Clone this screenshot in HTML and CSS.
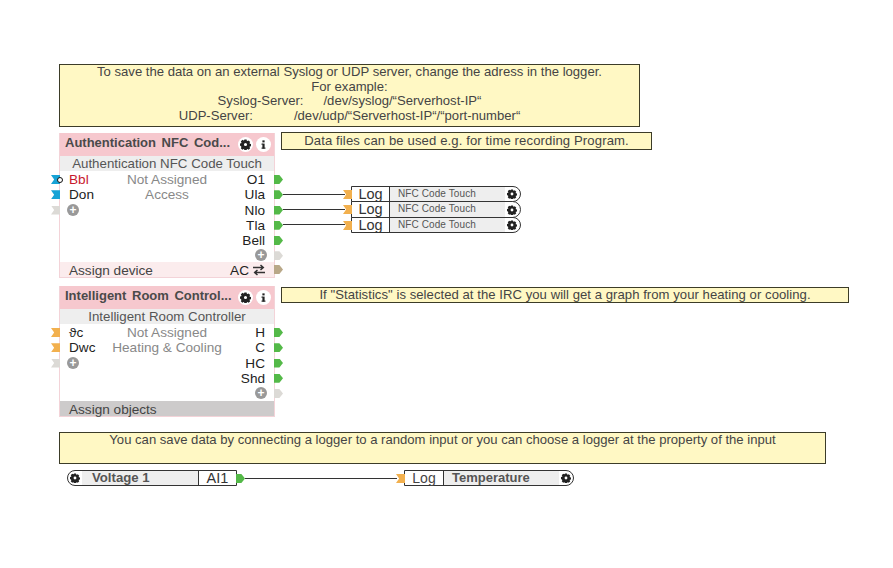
FILE: index.html
```html
<!DOCTYPE html>
<html lang="en">
<head>
<meta charset="utf-8">
<title>Logger</title>
<link rel="stylesheet" href="styles.css">
</head>
<body>
<svg class="defs" width="0" height="0" aria-hidden="true">
  <symbol id="cog" viewBox="0 0 12 12">
    <path fill="#222" fill-rule="evenodd" d="M4.800.6h2.400l.3 1.300.7.300 1.200-.7 1.700 1.700-.7 1.200.3.700 1.300.3v2.400l-1.300.3-.3.7.7 1.200-1.700 1.700-1.200-.7-.7.3-.3 1.300H4.800l-.3-1.300-.7-.3-1.200.7-1.700-1.700.7-1.200-.3-.7L0 7.200V4.800l1.300-.3.3-.7-.7-1.200 1.700-1.700 1.200.7.700-.3zM6 4.300a1.700 1.700 0 1 0 0 3.400 1.700 1.700 0 0 0 0-3.400z"/>
  </symbol>
  <symbol id="info" viewBox="0 0 12 12">
    <rect x="4.800" y="1.500" width="2.400" height="2.200" fill="#222"/>
    <rect x="4.800" y="5" width="2.400" height="5.500" fill="#222"/>
    <rect x="3.800" y="5" width="1.500" height="1.200" fill="#222"/>
    <rect x="3.800" y="9.400" width="4.400" height="1.100" fill="#222"/>
  </symbol>
</svg>

<main class="canvas">
  <p class="note note-main">To save the data on an external Syslog or UDP server, change the adress in the logger.<br>For example:<br><span class="syslog">Syslog-Server:</span>/dev/syslog/“Serverhost-IP“<br><span class="udp">UDP-Server:</span>/dev/udp/“Serverhost-IP“/“port-number“</p>
  <p class="note note-data">Data files can be used e.g. for time recording Program.</p>
  <p class="note note-stat">If "Statistics" is selected at the IRC you will get a graph from your heating or cooling.</p>
  <p class="note note-random">You can save data by connecting a logger to a random input or you can choose a logger at the property of the input</p>

  <section class="node node-auth">
    <header class="node-title">
      <h2>Authentication NFC Cod...</h2>
      <span class="round"><svg class="ico"><use href="#cog"/></svg></span>
      <span class="round"><svg class="ico"><use href="#info"/></svg></span>
    </header>
    <div class="node-sub">Authentication NFC Code Touch</div>
    <div class="node-body">
      <div class="col-in">
        <div class="port"><i class="pin-in blue"></i><b class="dot"></b><span class="red">Bbl</span></div>
        <div class="port"><i class="pin-in blue"></i>Don</div>
        <div class="port"><i class="pin-in pale"></i><span class="plus">+</span></div>
      </div>
      <div class="col-mid"><div class="port">Not Assigned</div><div class="port">Access</div></div>
      <div class="col-out">
        <div class="port">O1<i class="pin-out green"></i></div>
        <div class="port">Ula<i class="pin-out green"></i></div>
        <div class="port">Nlo<i class="pin-out green"></i></div>
        <div class="port">Tla<i class="pin-out green"></i></div>
        <div class="port">Bell<i class="pin-out green"></i></div>
        <div class="port"><span class="plus">+</span><i class="pin-out pale"></i></div>
      </div>
    </div>
    <footer class="node-foot foot-pink">
      <span>Assign device</span>
      <span class="port port-foot">AC
        <svg class="swap" viewBox="0 0 12 12"><path fill="none" stroke="#333" stroke-width="1.500" d="M0 3.500h10M7.500 1l2.800 2.500L7.500 6M12 8.500H2M4.500 6L1.700 8.500 4.500 11"/></svg>
        <i class="pin-out tan"></i>
      </span>
    </footer>
  </section>

  <section class="node node-irc">
    <header class="node-title">
      <h2>Intelligent Room Control...</h2>
      <span class="round"><svg class="ico"><use href="#cog"/></svg></span>
      <span class="round"><svg class="ico"><use href="#info"/></svg></span>
    </header>
    <div class="node-sub">Intelligent Room Controller</div>
    <div class="node-body">
      <div class="col-in">
        <div class="port"><i class="pin-in orange"></i>ϑc</div>
        <div class="port"><i class="pin-in orange"></i>Dwc</div>
        <div class="port"><i class="pin-in pale"></i><span class="plus">+</span></div>
      </div>
      <div class="col-mid"><div class="port">Not Assigned</div><div class="port">Heating &amp; Cooling</div></div>
      <div class="col-out">
        <div class="port">H<i class="pin-out green"></i></div>
        <div class="port">C<i class="pin-out green"></i></div>
        <div class="port">HC<i class="pin-out green"></i></div>
        <div class="port">Shd<i class="pin-out green"></i></div>
        <div class="port"><span class="plus">+</span><i class="pin-out pale"></i></div>
      </div>
    </div>
    <footer class="node-foot foot-grey"><span>Assign objects</span></footer>
  </section>

  <i class="wire wire-1"></i>
  <i class="wire wire-2"></i>
  <i class="wire wire-3"></i>
  <i class="wire wire-4"></i>

  <div class="log log-1"><i class="pin-log"></i><span class="log-name">Log</span><span class="log-label">NFC Code Touch</span><span class="log-end"><svg class="ico"><use href="#cog"/></svg></span></div>
  <div class="log log-2"><i class="pin-log"></i><span class="log-name">Log</span><span class="log-label">NFC Code Touch</span><span class="log-end"><svg class="ico"><use href="#cog"/></svg></span></div>
  <div class="log log-3"><i class="pin-log"></i><span class="log-name">Log</span><span class="log-label">NFC Code Touch</span><span class="log-end"><svg class="ico"><use href="#cog"/></svg></span></div>

  <div class="voltage"><span class="volt-start"><svg class="ico"><use href="#cog"/></svg></span><span class="volt-label">Voltage 1</span><span class="volt-name">AI1</span><i class="pin-volt green"></i></div>

  <div class="log log-temp"><i class="pin-log"></i><span class="log-name">Log</span><span class="log-label">Temperature</span><span class="log-end"><svg class="ico"><use href="#cog"/></svg></span></div>
</main>
</body>
</html>
```

FILE: styles.css
```css
* { box-sizing: border-box; }
html, body { margin: 0; padding: 0; background: #fff; }
body { font-family: "Liberation Sans", Arial, sans-serif; color: #222; }
.defs { position: absolute; }
.canvas { position: relative; width: 893px; height: 568px; overflow: hidden; }

.note {
  position: absolute; margin: 0; background: #fff8c4; border: 1px solid #3c3c28;
  text-align: center; font-size: 13.100px; line-height: 14.500px; color: #444;
}
.note-main { left: 59px; top: 64px; width: 581px; height: 63px; }
.note-data { left: 281px; top: 132px; width: 371px; height: 18px; line-height: 16px; letter-spacing: .12px; }
.note-stat { left: 281px; top: 287px; width: 568px; height: 16px; line-height: 14px; letter-spacing: .05px; }
.note-random { left: 59px; top: 432px; width: 767px; height: 32px; }
.syslog { margin-right: 20px; }
.udp { margin-right: 41px; }

.node { position: absolute; left: 59px; width: 216px; border: 1px solid #f3d3d8; border-top: 0; background: #fff; font-size: 13.600px; line-height: 15.250px; }
.node-auth { top: 133px; height: 145px; }
.node-irc { top: 286px; height: 131px; }
.node-title { height: 23px; background: #f6c8ce; display: flex; align-items: center; padding: 0 3px 0 5px; gap: 3px; }
.node-title h2 { margin: 0; padding-bottom: 3px; flex: 1; font-size: 13px; font-weight: bold; color: #4a4a4a; white-space: nowrap; word-spacing: 2px; overflow: hidden; }
.round { width: 15px; height: 15px; border-radius: 50%; background: #fff; display: flex; align-items: center; justify-content: center; flex: none; }
.ico { width: 11px; height: 11px; display: block; }
.node-sub { height: 15px; background: #eee; text-align: center; color: #555; font-size: 13.300px; line-height: 15px; }
.node-body { display: grid; grid-template-columns: 50px 1fr 50px; padding-top: 1px; }
.node-auth .node-body { height: 91px; }
.node-irc .node-body { height: 77px; }
.port { position: relative; height: 15.250px; white-space: nowrap; }
.col-in { padding-left: 9px; color: #222; }
.col-mid { text-align: center; color: #888; }
.col-out { text-align: right; padding-right: 9px; }
.red { color: #c8182c; }
.plus { display: inline-block; width: 12px; height: 12px; border-radius: 50%; background: #999; color: #fff; font: bold 12px/12px "Liberation Sans", sans-serif; text-align: center; vertical-align: 1px; }
.col-in .plus { margin-left: -2px; }
.col-out .plus { margin-right: -2px; }

.pin-in { position: absolute; left: -18px; top: 3px; width: 9px; height: 9px; clip-path: polygon(0 0, 100% 0, 100% 100%, 0 100%, 35% 50%); }
.pin-out { position: absolute; right: -18px; top: 3px; width: 9px; height: 9px; clip-path: polygon(0 0, 60% 0, 100% 50%, 60% 100%, 0 100%); }
.blue { background: #17a3d6; }
.orange { background: #f2b04e; }
.pale { background: #dcdad6; }
.green { background: #54b948; }
.tan { background: #b9a888; }
.dot { position: absolute; left: -12px; top: 5px; width: 6px; height: 6px; border: 1.500px solid #111; border-radius: 50%; background: #fff; }

.node-foot { height: 15px; display: flex; justify-content: space-between; padding: 0 9px; line-height: 17px; color: #444; }
.foot-pink { background: #fbeced; }
.foot-grey { background: #cdcbcb; }
.port-foot { height: 15px; display: flex; align-items: center; gap: 4px; padding-top: 1px; color: #222; }
.swap { width: 12px; height: 12px; }
.port-foot .pin-out { top: 3px; right: -18px; }

.wire { position: absolute; height: 1px; background: #333; }
.wire-1 { left: 283px; top: 194px; width: 62px; }
.wire-2 { left: 283px; top: 209px; width: 62px; }
.wire-3 { left: 283px; top: 224px; width: 62px; }
.wire-4 { left: 245px; top: 478px; width: 152px; }

.log { position: absolute; display: flex; border: 1px solid #333; border-radius: 0 9px 9px 0; background: #fff; color: #333; }
.log-1 { left: 351px; top: 186px; width: 170px; height: 16px; }
.log-2 { left: 351px; top: 201px; width: 170px; height: 17px; }
.log-3 { left: 351px; top: 217px; width: 170px; height: 16px; }
.log-temp { left: 404px; top: 470px; width: 170px; height: 16px; }
.pin-log { position: absolute; left: -9px; top: 3px; width: 9px; height: 9px; background: #f2b04e; clip-path: polygon(0 0, 100% 0, 100% 100%, 0 100%, 35% 50%); }
.log-name { width: 38px; border-right: 1px solid #333; text-align: center; font-size: 14.500px; line-height: 14px; flex: none; }
.log-label { flex: 1; background: #eee; font-size: 10px; line-height: 14px; padding-left: 8px; color: #555; letter-spacing: .1px; }
.log-end { width: 15px; flex: none; display: flex; align-items: center; justify-content: center; padding-right: 1px; }
.log-end .ico { width: 10px; height: 10px; }
.log-temp .log-name { width: 39px; font-size: 14px; color: #444; }
.log-temp .log-label { font-size: 13px; font-weight: bold; letter-spacing: 0; }
.log-temp .log-end { width: 14px; padding-right: 0; }

.voltage { position: absolute; left: 67px; top: 470px; width: 170px; height: 16px; display: flex; border: 1px solid #333; border-radius: 9px 0 0 9px; background: #fff; }
.volt-start { width: 14px; flex: none; display: flex; align-items: center; justify-content: center; }
.volt-start .ico { width: 10px; height: 10px; }
.volt-label { flex: 1; background: #eee; font-size: 13.200px; font-weight: bold; line-height: 14px; padding-left: 10px; color: #555; }
.volt-name { width: 38px; flex: none; border-left: 1px solid #333; text-align: center; font-size: 14.500px; line-height: 14px; color: #333; }
.pin-volt { position: absolute; right: -9px; top: 3px; width: 9px; height: 9px; clip-path: polygon(0 0, 60% 0, 100% 50%, 60% 100%, 0 100%); }
```
